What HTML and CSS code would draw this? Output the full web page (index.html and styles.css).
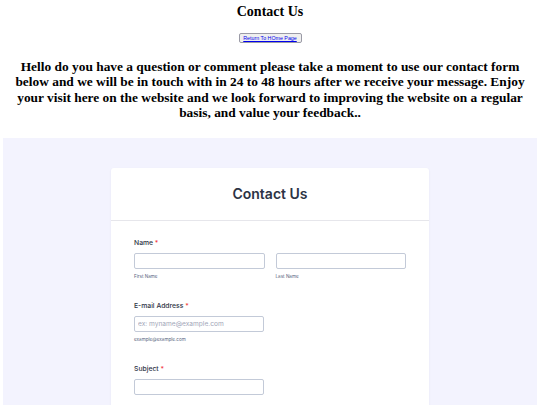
FILE: index.html
```html
<!DOCTYPE html>
<html lang="en">
<head>
<meta charset="utf-8">
<title>Contact Us</title>
<link rel="stylesheet" href="styles.css">
</head>
<body>
  <h1 class="page-title">Contact Us</h1>
  <div class="return-wrap">
    <button class="return-btn" type="button"><a href="#">Return To HOme Page</a></button>
  </div>
  <h3 class="intro">Hello do you have a question or comment please take a moment to use our contact form below and we will be in touch with in 24 to 48 hours after we receive your message. Enjoy your visit here on the website and we look forward to improving the website on a regular basis, and value your feedback..</h3>

  <div class="form-frame">
    <div class="card">
      <div class="card-header">
        <h2 class="card-title">Contact Us</h2>
      </div>
      <div class="card-body">
        <div class="field">
          <div class="label">Name <span class="req">*</span></div>
          <div class="name-row">
            <div class="sub-field">
              <input class="input" type="text">
              <div class="sublabel">First Name</div>
            </div>
            <div class="sub-field">
              <input class="input" type="text">
              <div class="sublabel">Last Name</div>
            </div>
          </div>
        </div>
        <div class="field">
          <div class="label">E-mail Address <span class="req">*</span></div>
          <input class="input half" type="email" placeholder="ex: myname@example.com">
          <div class="sublabel">example@example.com</div>
        </div>
        <div class="field">
          <div class="label">Subject <span class="req">*</span></div>
          <input class="input half" type="text">
        </div>
      </div>
    </div>
  </div>
</body>
</html>
```

FILE: styles.css
```css
html, body {
  margin: 0;
  padding: 0;
  background: #ffffff;
}

body {
  font-family: "Liberation Serif", "Times New Roman", serif;
  color: #000000;
  overflow: hidden;
  height: 405px;
}

.page-title {
  margin: 4px 0 0;
  font-size: 14px;
  line-height: 16px;
  font-weight: bold;
  text-align: center;
}

.return-wrap {
  text-align: center;
  margin-top: 13px;
  line-height: 0;
}

.return-btn {
  display: inline-block;
  width: 63px;
  height: 10px;
  padding: 0;
  margin: 0;
  border: 1px solid #9a9aa6;
  border-radius: 2px;
  background: #efefef;
  font-family: "Liberation Sans", Arial, sans-serif;
  font-size: 5.3px;
  line-height: 8px;
  vertical-align: top;
}

.return-btn a {
  color: #0000ee;
  text-decoration: underline;
}

.intro {
  margin: 16px 8px 0;
  font-size: 13.4px;
  line-height: 15.3px;
  font-weight: bold;
  text-align: center;
}

.form-frame {
  box-sizing: border-box;
  margin: 18px 3px 0;
  padding-top: 30px;
  background: #f3f3fe;
  height: 267px;
}

.card {
  box-sizing: border-box;
  width: 318px;
  margin: 0 auto;
  background: #ffffff;
  border-radius: 3px 3px 0 0;
  box-shadow: 0 1px 2px rgba(87, 100, 126, 0.10);
  font-family: Inter, "Noto Sans", sans-serif;
  color: #2c3345;
  height: 237px;
}

.card-header {
  height: 52px;
  border-bottom: 1px solid #e6e6eb;
  display: flex;
  align-items: center;
  justify-content: center;
}

.card-title {
  margin: 0;
  font-size: 14px;
  font-weight: 600;
  color: #2c3345;
  line-height: 18px;
}

.card-body {
  padding: 17px 23px 0;
}

.field {
  margin-bottom: 21px;
}

.label {
  font-size: 6.8px;
  line-height: 9px;
  font-weight: 500;
  color: #2c3345;
  margin-bottom: 6px;
}

.req {
  color: #f23a3c;
}

.name-row {
  display: flex;
  gap: 11px;
}

.sub-field {
  flex: 1;
}

.input {
  display: block;
  box-sizing: border-box;
  width: 100%;
  height: 16px;
  margin: 0;
  padding: 0 3px;
  border: 1px solid #c3cad8;
  border-radius: 2px;
  background: #ffffff;
  font-family: Inter, "Noto Sans", sans-serif;
  font-size: 6.6px;
  color: #2c3345;
  outline: none;
}

.input.half {
  width: 130px;
}

.input::placeholder {
  color: #a2a6b8;
}

.sublabel {
  margin-top: 5px;
  font-size: 4.6px;
  line-height: 6px;
  color: #57647e;
}
```
